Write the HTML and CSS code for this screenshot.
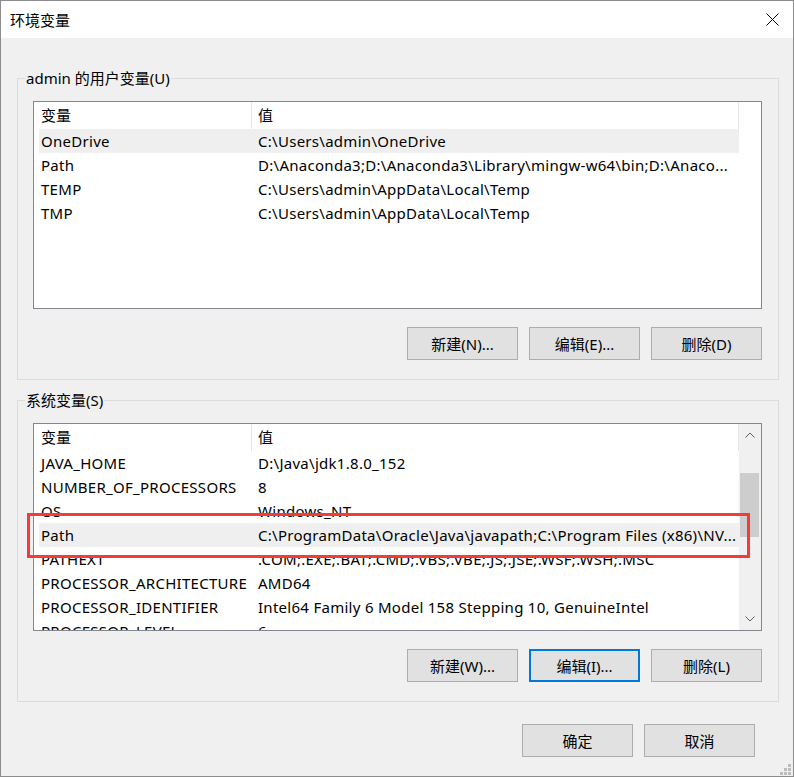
FILE: index.html
```html
<!DOCTYPE html>
<html lang="zh-CN">

<head>
    <meta charset="UTF-8" />
    <meta name="viewport" content="width=device-width, initial-scale=1.0" />
    <title>环境变量</title>
    <link rel="stylesheet" href="styles.css">
</head>

<body>
    <div class="window">
        <div class="titlebar">
            <span class="title">环境变量</span>
            <svg class="close" viewBox="0 0 13 13" width="13" height="13">
                <path d="M0.5 0.5 L12.5 12.5 M12.5 0.5 L0.5 12.5" stroke="#000" stroke-width="1" fill="none" />
            </svg>
        </div>

        <div class="content">
            <div class="group">
                <div class="group-title">admin 的用户变量(U)</div>
                <div class="list">
                    <div class="list-body">
                        <div class="list-head">
                            <div>变量</div>
                            <div>值</div>
                        </div>
                        <div class="row selected"><span>OneDrive</span><span>C:\Users\admin\OneDrive</span></div>
                        <div class="row"><span>Path</span><span>D:\Anaconda3;D:\Anaconda3\Library\mingw-w64\bin;D:\Anaco...</span></div>
                        <div class="row"><span>TEMP</span><span>C:\Users\admin\AppData\Local\Temp</span></div>
                        <div class="row"><span>TMP</span><span>C:\Users\admin\AppData\Local\Temp</span></div>
                    </div>
                </div>
                <div class="buttons">
                    <button class="btn">新建(N)...</button>
                    <button class="btn">编辑(E)...</button>
                    <button class="btn">删除(D)</button>
                </div>
            </div>

            <div class="group">
                <div class="group-title">系统变量(S)</div>
                <div class="list">
                    <div class="list-body">
                        <div class="list-head">
                            <div>变量</div>
                            <div>值</div>
                        </div>
                        <div class="row"><span>JAVA_HOME</span><span>D:\Java\jdk1.8.0_152</span></div>
                        <div class="row"><span>NUMBER_OF_PROCESSORS</span><span>8</span></div>
                        <div class="row"><span>OS</span><span>Windows_NT</span></div>
                        <div class="row selected"><span>Path</span><span>C:\ProgramData\Oracle\Java\javapath;C:\Program Files (x86)\NV...</span></div>
                        <div class="row"><span>PATHEXT</span><span>.COM;.EXE;.BAT;.CMD;.VBS;.VBE;.JS;.JSE;.WSF;.WSH;.MSC</span></div>
                        <div class="row"><span>PROCESSOR_ARCHITECTURE</span><span>AMD64</span></div>
                        <div class="row"><span>PROCESSOR_IDENTIFIER</span><span>Intel64 Family 6 Model 158 Stepping 10, GenuineIntel</span></div>
                        <div class="row"><span>PROCESSOR_LEVEL</span><span>6</span></div>
                    </div>
                    <div class="scrollbar">
                        <div class="scroll-btn">
                            <svg viewBox="0 0 10 6" width="10" height="6">
                                <polyline points="0.5,5.5 5,1 9.5,5.5" stroke="#606060" stroke-width="1" fill="none" />
                            </svg>
                        </div>
                        <div class="scroll-track">
                            <div class="thumb"></div>
                        </div>
                        <div class="scroll-btn">
                            <svg viewBox="0 0 10 6" width="10" height="6">
                                <polyline points="0.5,0.5 5,5 9.5,0.5" stroke="#606060" stroke-width="1" fill="none" />
                            </svg>
                        </div>
                    </div>
                </div>
                <div class="buttons">
                    <button class="btn">新建(W)...</button>
                    <button class="btn focus">编辑(I)...</button>
                    <button class="btn">删除(L)</button>
                </div>
            </div>

            <div class="footer">
                <button class="btn">确定</button>
                <button class="btn">取消</button>
            </div>
        </div>

        <div class="mark"></div>

        <svg class="grip" viewBox="0 0 11 11" width="11" height="11">
            <rect x="8" y="0" width="3" height="3" fill="#bcbcbc" />
            <rect x="4" y="4" width="3" height="3" fill="#bcbcbc" />
            <rect x="8" y="4" width="3" height="3" fill="#bcbcbc" />
            <rect x="0" y="8" width="3" height="3" fill="#bcbcbc" />
            <rect x="4" y="8" width="3" height="3" fill="#bcbcbc" />
            <rect x="8" y="8" width="3" height="3" fill="#bcbcbc" />
        </svg>
    </div>
</body>

</html>
```

FILE: styles.css
```css
* {
    box-sizing: border-box;
}

body {
    margin: 0;
    font-family: "Noto Sans", "Noto Sans CJK SC", sans-serif;
    font-size: 15px;
    color: #000;
    background: #fff;
}

.window {
    position: relative;
    width: 794px;
    height: 777px;
    border: 1px solid #8c8c8c;
    background: #f0f0f0;
    overflow: hidden;
}

.titlebar {
    height: 37px;
    background: #fff;
    display: flex;
    align-items: center;
    justify-content: space-between;
    padding: 0 14px 0 9px;
}

.title {
    line-height: 20px;
}

.close {
    display: block;
}

.content {
    padding: 0 14px 0 16px;
}

.group {
    border: 1px solid #dcdcdc;
    padding: 0 16px 19px 15px;
    margin-top: 40px;
}

.group + .group {
    margin-top: 20px;
}

.group-title {
    display: table;
    margin: -11px 0 0 -8px;
    padding: 0 1px;
    line-height: 20px;
    background: #f0f0f0;
}

.list {
    margin-top: 13px;
    height: 208px;
    border: 1px solid #828790;
    background: #fff;
    display: flex;
}

.list-body {
    width: 705px;
    overflow: hidden;
}

.list-head {
    display: grid;
    grid-template-columns: 218px 487px;
    height: 27px;
}

.list-head div {
    line-height: 27px;
    padding-left: 7px;
    border-right: 1px solid #e5e5e5;
}

.list-head div + div {
    padding-left: 6px;
}

.row {
    display: grid;
    grid-template-columns: 212px 488px;
    margin-left: 5px;
    height: 24px;
    line-height: 24px;
    white-space: nowrap;
    letter-spacing: 0.28px;
}

.row span {
    overflow: hidden;
    padding-left: 2px;
}

.row span + span {
    padding-left: 7px;
}

.row.selected {
    background: #efefef;
}

.scrollbar {
    width: 22px;
    background: #f0f0f0;
    display: flex;
    flex-direction: column;
}

.scroll-btn {
    height: 22px;
    display: flex;
    align-items: center;
    justify-content: center;
}

.scroll-btn svg {
    display: block;
}

.scroll-track {
    flex: 1;
}

.thumb {
    margin: 27px 0 0 1px;
    width: 19px;
    height: 64px;
    background: #cdcdcd;
}

.buttons {
    display: flex;
    justify-content: flex-end;
    gap: 11px;
    margin-top: 18px;
}

.btn {
    width: 111px;
    height: 33px;
    padding: 0;
    font: inherit;
    color: #000;
    background: #e1e1e1;
    border: 1px solid #adadad;
}

.btn.focus {
    border: 2px solid #0078d7;
}

.footer {
    display: flex;
    justify-content: flex-end;
    gap: 11px;
    margin-top: 22px;
    padding-right: 24px;
}

.mark {
    position: absolute;
    left: 26px;
    top: 512px;
    width: 723px;
    height: 45px;
    border: 3px solid #f23c3c;
}

.grip {
    position: absolute;
    right: 2px;
    bottom: 1px;
}
```
